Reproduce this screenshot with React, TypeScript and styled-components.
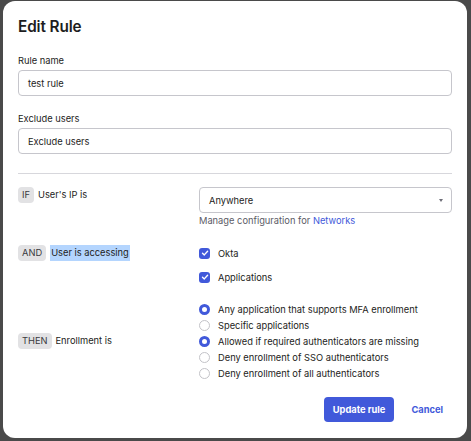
import styled, { createGlobalStyle } from 'styled-components';

const GlobalStyle = createGlobalStyle`
  html, body {
    margin: 0;
    padding: 0;
    background: #4a4a4a;
  }
  body {
    font-family: Inter, "Noto Sans", sans-serif;
    color: #1d1d21;
    -webkit-font-smoothing: antialiased;
  }
`;

const BLUE = '#4159da';
const TEXT = '9.3px';

const Backdrop = styled.div`
  width: 471px;
  height: 441px;
  padding: 1px 0 0 3px;
  box-sizing: border-box;
  overflow: hidden;
`;

const Modal = styled.div`
  width: 464px;
  height: 437px;
  box-sizing: border-box;
  background: #fff;
  border-radius: 12px;
  padding: 16px 15px 16px 15px;
  display: flex;
  flex-direction: column;
`;

const Title = styled.h1`
  margin: 0;
  font-size: 15.3px;
  line-height: 20px;
  font-weight: 600;
  letter-spacing: -0.1px;
`;

const Field = styled.div<{ $top: number }>`
  display: flex;
  flex-direction: column;
  gap: 3px;
  margin-top: ${(p) => p.$top}px;
`;

const Label = styled.label`
  font-size: ${TEXT};
  line-height: 12px;
`;

const TextInput = styled.div`
  height: 26px;
  box-sizing: border-box;
  border: 1px solid #c6c6cc;
  border-radius: 4px;
  padding: 0 9px;
  display: flex;
  align-items: center;
  font-size: ${TEXT};
  color: #1d1d21;
`;

const Divider = styled.hr`
  border: none;
  border-top: 1px solid #d7d7dc;
  margin: 19px 0 13px 0;
`;

const RuleRow = styled.div<{ $center?: boolean; $top?: number }>`
  display: grid;
  grid-template-columns: 181px 1fr;
  align-items: ${(p) => (p.$center ? 'center' : 'start')};
  margin-top: ${(p) => p.$top ?? 0}px;
`;

const Condition = styled.div`
  display: flex;
  align-items: center;
  gap: 4px;
  font-size: ${TEXT};
  line-height: 16px;
`;

const Badge = styled.span`
  display: inline-flex;
  align-items: center;
  height: 16px;
  padding: 0 4px;
  border-radius: 4px;
  background: #e2e2e4;
  color: #3a3a40;
  font-size: ${TEXT};
`;

const Highlight = styled.span`
  background: #b4d5fe;
  padding: 0 1px;
  line-height: 16px;
`;

const Stack = styled.div<{ $gap: number }>`
  display: flex;
  flex-direction: column;
  gap: ${(p) => p.$gap}px;
`;

const Select = styled.div`
  height: 26px;
  box-sizing: border-box;
  border: 1px solid #c6c6cc;
  border-radius: 4px;
  padding: 0 8px 0 9px;
  display: flex;
  align-items: center;
  justify-content: space-between;
  font-size: ${TEXT};
`;

const Caret = styled.span`
  width: 0;
  height: 0;
  border-left: 2.5px solid transparent;
  border-right: 2.5px solid transparent;
  border-top: 3px solid #6e6e78;
`;

const Helper = styled.div`
  margin-top: 2px;
  font-size: ${TEXT};
  line-height: 12px;
  color: #5c5c66;
`;

const Link = styled.a`
  color: ${BLUE};
  text-decoration: none;
`;

const Option = styled.div`
  display: flex;
  align-items: center;
  gap: 8px;
  height: 16px;
  font-size: ${TEXT};
`;

const CheckBox = styled.span`
  width: 11px;
  height: 11px;
  border-radius: 3px;
  background: ${BLUE};
  display: inline-flex;
  align-items: center;
  justify-content: center;
  flex-shrink: 0;
`;

const Radio = styled.span<{ $on?: boolean }>`
  width: 11px;
  height: 11px;
  box-sizing: border-box;
  border-radius: 50%;
  flex-shrink: 0;
  background: #fff;
  border: ${(p) => (p.$on ? `3.5px solid ${BLUE}` : '1px solid #c3c3c8')};
`;

const Footer = styled.div`
  margin-top: auto;
  display: flex;
  justify-content: flex-end;
  align-items: center;
  gap: 17px;
  padding-right: 9px;
`;

const PrimaryButton = styled.button`
  height: 25px;
  padding: 0 9px;
  border: none;
  border-radius: 4px;
  background: ${BLUE};
  color: #fff;
  font-family: inherit;
  font-size: ${TEXT};
  font-weight: 700;
`;

const LinkButton = styled.button`
  border: none;
  background: none;
  padding: 0;
  color: ${BLUE};
  font-family: inherit;
  font-size: ${TEXT};
  font-weight: 700;
`;

const Check = () => (
  <svg width="8" height="8" viewBox="0 0 8 8">
    <path d="M1.5 4.2 L3.3 5.9 L6.6 2.3" fill="none" stroke="#fff" strokeWidth="1.4" strokeLinecap="round" strokeLinejoin="round" />
  </svg>
);

const enrollment = [
  { label: 'Any application that supports MFA enrollment', on: true },
  { label: 'Specific applications', on: false },
  { label: 'Allowed if required authenticators are missing', on: true },
  { label: 'Deny enrollment of SSO authenticators', on: false },
  { label: 'Deny enrollment of all authenticators', on: false },
];

export default function App() {
  return (
    <>
      <GlobalStyle />
      <Backdrop>
        <Modal>
          <Title>Edit Rule</Title>

          <Field $top={18}>
            <Label>Rule name</Label>
            <TextInput>test rule</TextInput>
          </Field>

          <Field $top={17}>
            <Label>Exclude users</Label>
            <TextInput>Exclude users</TextInput>
          </Field>

          <Divider />

          <RuleRow>
            <Condition>
              <Badge>IF</Badge>
              <span>User's IP is</span>
            </Condition>
            <div>
              <Select>
                <span>Anywhere</span>
                <Caret />
              </Select>
              <Helper>
                Manage configuration for <Link href="#">Networks</Link>
              </Helper>
            </div>
          </RuleRow>

          <RuleRow $top={18}>
            <Condition>
              <Badge>AND</Badge>
              <Highlight>User is accessing</Highlight>
            </Condition>
            <Stack $gap={8}>
              <Option>
                <CheckBox><Check /></CheckBox>
                Okta
              </Option>
              <Option>
                <CheckBox><Check /></CheckBox>
                Applications
              </Option>
            </Stack>
          </RuleRow>

          <RuleRow $center $top={16}>
            <Condition>
              <Badge>THEN</Badge>
              <span>Enrollment is</span>
            </Condition>
            <Stack $gap={0}>
              {enrollment.map((o) => (
                <Option key={o.label}>
                  <Radio $on={o.on} />
                  {o.label}
                </Option>
              ))}
            </Stack>
          </RuleRow>

          <Footer>
            <PrimaryButton>Update rule</PrimaryButton>
            <LinkButton>Cancel</LinkButton>
          </Footer>
        </Modal>
      </Backdrop>
    </>
  );
}
